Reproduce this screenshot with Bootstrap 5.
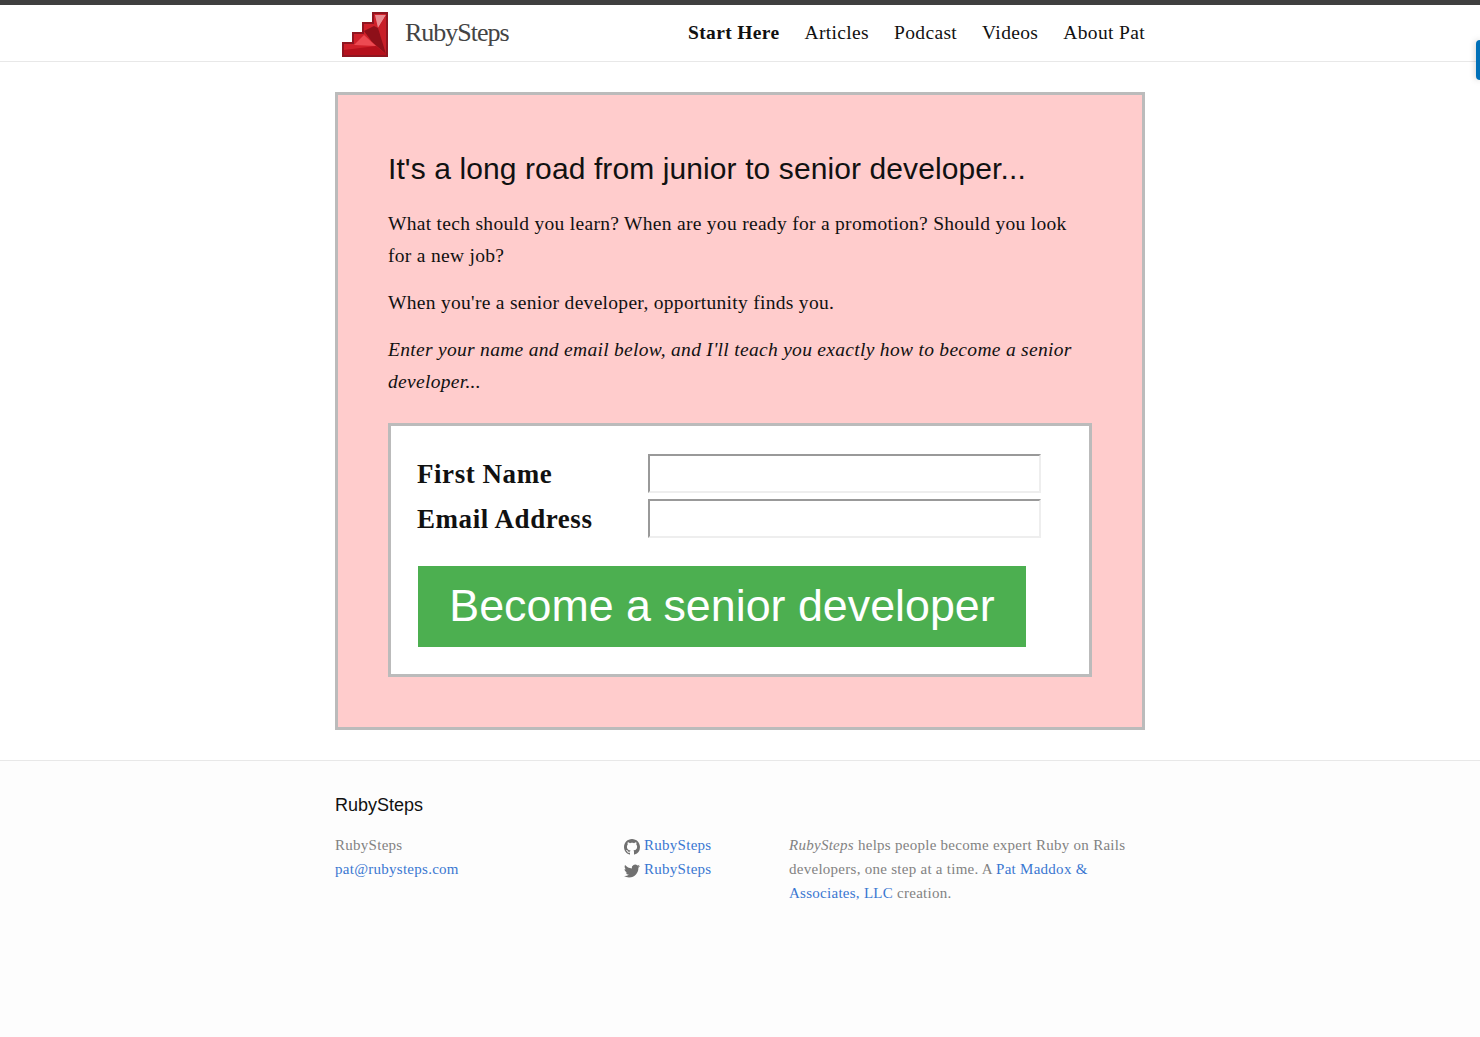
<!DOCTYPE html>
<html lang="en">
<head>
  <meta charset="UTF-8" />
  <meta name="viewport" content="width=device-width, initial-scale=1" />
  <title>RubySteps</title>
  <link href="https://cdn.jsdelivr.net/npm/bootstrap@5.3.3/dist/css/bootstrap.min.css" rel="stylesheet" />
  <style>
    body { font-family: "Liberation Serif", serif; color: #111; background: #fff; height: 1037px; overflow: hidden; }
    .wrap { width: 810px; margin: 0 auto; }
    .top-bar { height: 62px; border-top: 5px solid #3f3f3f; border-bottom: 1px solid #e8e8e8; }
    .top-bar .wrap { height: 56px; }
    .logo-mark { margin: 2px 0 0 7px; display: block; }
    .logo-text { font-size: 26px; letter-spacing: -1px; color: #444; margin-left: 17px; line-height: 1; padding-bottom: 1px; }
    .top-links { gap: 25px; font-size: 19.5px; letter-spacing: .35px; }
    .top-links a { color: #111; text-decoration: none; }
    .top-links a.active { font-weight: 700; }
    .side-tab { position: absolute; top: 40px; right: 0; width: 4px; height: 40px; background: #0070b8; border-radius: 4px 0 0 4px; box-shadow: 0 0 6px rgba(0,0,0,.25); }
    .pitch { margin-top: 30px; height: 638px; background: #fcc; border: 3px solid #bbb; padding: 51px 50px 50px; }
    .pitch h1 { font-family: "Liberation Sans", sans-serif; font-size: 30px; letter-spacing: .1px; line-height: 46px; margin: 0 0 16px; font-weight: 400; color: #111; }
    .pitch p { font-size: 19.5px; line-height: 32px; letter-spacing: .3px; margin: 0 0 15px; color: #111; }
    .signup { margin-top: 25px; height: 254px; background: #fff; border: 3px solid #bbb; padding: 26px 26px 0; }
    .field { height: 45px; }
    .field label { width: 231px; font-size: 27px; font-weight: 700; letter-spacing: .55px; color: #111; padding-top: 2px; }
    .field input { width: 393px; height: 39px; border: 2px solid; border-color: #999 #eee #eee #999; background: #fff; padding: 0; margin-top: 2px; outline: 0; }
    .go-btn { display: block; width: 608px; height: 81px; margin: 24px 0 0 1px; padding: 0 0 2px; background: #4caf50; color: #fff; border: 0; border-radius: 0; font-family: "Liberation Sans", sans-serif; font-size: 44.8px; line-height: 1; }
    .foot { margin-top: 30px; height: 277px; background: #fdfdfd; border-top: 1px solid #e8e8e8; padding-top: 32px; }
    .foot h4 { font-family: "Liberation Sans", sans-serif; font-size: 18px; line-height: 24px; font-weight: 400; color: #111; margin: 0 0 16px; }
    .foot-cols { font-size: 15px; line-height: 24px; letter-spacing: .27px; color: #828282; }
    .foot-cols a { color: #3a77d1; text-decoration: none; }
    .foot-one { width: 289px; }
    .foot-two { width: 165px; }
    .foot-three { width: 356px; }
    .foot-icon { width: 16px; height: 16px; fill: #707070; margin-right: 4px; vertical-align: -5px; }
  </style>
</head>
<body>
<header class="top-bar">
  <div class="wrap d-flex align-items-center">
    <svg class="logo-mark" width="46" height="45" viewBox="0 0 46 45">
      <path fill="#8f1520" d="M0 45V30h10V20h10V10h10V0h16v45z"/>
      <path fill="#d0202a" d="M2 43V32h10V22h10V12h10V2h12v41z"/>
      <path fill="#e98a90" d="M33 3h11l-8 13z"/>
      <path fill="#c81e28" d="M36 16l8-13v39z"/>
      <path fill="#8e1019" d="M22 19l10-5 4 2 8 26-14-12z"/>
      <path fill="#ec4a52" d="M12 33l10-10 12 11z"/>
      <path fill="#b5101c" d="M2 38l32-4 10 8v1H2z"/>
    </svg>
    <div class="logo-text">RubySteps</div>
    <nav class="top-links d-flex ms-auto">
      <a class="active" href="#">Start Here</a>
      <a href="#">Articles</a>
      <a href="#">Podcast</a>
      <a href="#">Videos</a>
      <a href="#">About Pat</a>
    </nav>
  </div>
</header>
<div class="side-tab"></div>

<main class="wrap pitch">
  <h1>It's a long road from junior to senior developer...</h1>
  <p>What tech should you learn? When are you ready for a promotion? Should you look for a new job?</p>
  <p>When you're a senior developer, opportunity finds you.</p>
  <p class="fst-italic">Enter your name and email below, and I'll teach you exactly how to become a senior developer...</p>
  <form class="signup">
    <div class="field d-flex">
      <label for="firstName">First Name</label>
      <input id="firstName" type="text" />
    </div>
    <div class="field d-flex">
      <label for="emailAddress">Email Address</label>
      <input id="emailAddress" type="text" />
    </div>
    <button type="button" class="btn go-btn">Become a senior developer</button>
  </form>
</main>

<footer class="foot">
  <div class="wrap">
    <h4>RubySteps</h4>
    <div class="foot-cols d-flex">
      <div class="foot-one">RubySteps<br /><a href="#">pat@rubysteps.com</a></div>
      <div class="foot-two">
        <div><svg class="foot-icon" viewBox="0 0 16 16"><path d="M8 0C3.58 0 0 3.58 0 8c0 3.54 2.29 6.53 5.47 7.59.4.07.55-.17.55-.38 0-.19-.01-.82-.01-1.49-2.01.37-2.53-.49-2.69-.94-.09-.23-.48-.94-.82-1.13-.28-.15-.68-.52-.01-.53.63-.01 1.08.58 1.23.82.72 1.21 1.87.87 2.33.66.07-.52.28-.87.51-1.07-1.78-.2-3.64-.89-3.64-3.95 0-.87.31-1.59.82-2.15-.08-.2-.36-1.02.08-2.12 0 0 .67-.21 2.2.82.64-.18 1.32-.27 2-.27s1.36.09 2 .27c1.53-1.04 2.2-.82 2.2-.82.44 1.1.16 1.92.08 2.12.51.56.82 1.27.82 2.15 0 3.07-1.87 3.75-3.65 3.95.29.25.54.73.54 1.48 0 1.07-.01 1.93-.01 2.2 0 .21.15.46.55.38A8.01 8.01 0 0 0 16 8c0-4.42-3.58-8-8-8z"/></svg><a href="#">RubySteps</a></div>
        <div><svg class="foot-icon" viewBox="0 0 24 24"><path d="M23.95 4.57a10 10 0 0 1-2.82.77 4.96 4.96 0 0 0 2.16-2.72c-.95.55-2 .95-3.12 1.19a4.92 4.92 0 0 0-8.38 4.48C7.69 8.09 4.07 6.13 1.64 3.16a4.82 4.82 0 0 0-.67 2.48c0 1.71.87 3.21 2.19 4.1a4.9 4.9 0 0 1-2.23-.61v.06c0 2.39 1.7 4.38 3.95 4.83a5 5 0 0 1-2.21.08 4.94 4.94 0 0 0 4.6 3.42A9.87 9.87 0 0 1 0 19.54a14 14 0 0 0 7.56 2.21c9.05 0 14-7.5 14-13.98 0-.21 0-.42-.02-.63a9.94 9.94 0 0 0 2.46-2.55z"/></svg><a href="#">RubySteps</a></div>
      </div>
      <div class="foot-three"><em>RubySteps</em> helps people become expert Ruby on Rails developers, one step at a time. A <a href="#">Pat Maddox &amp; Associates, LLC</a> creation.</div>
    </div>
  </div>
</footer>
<script src="https://cdn.jsdelivr.net/npm/bootstrap@5.3.3/dist/js/bootstrap.bundle.min.js"></script>
</body>
</html>
